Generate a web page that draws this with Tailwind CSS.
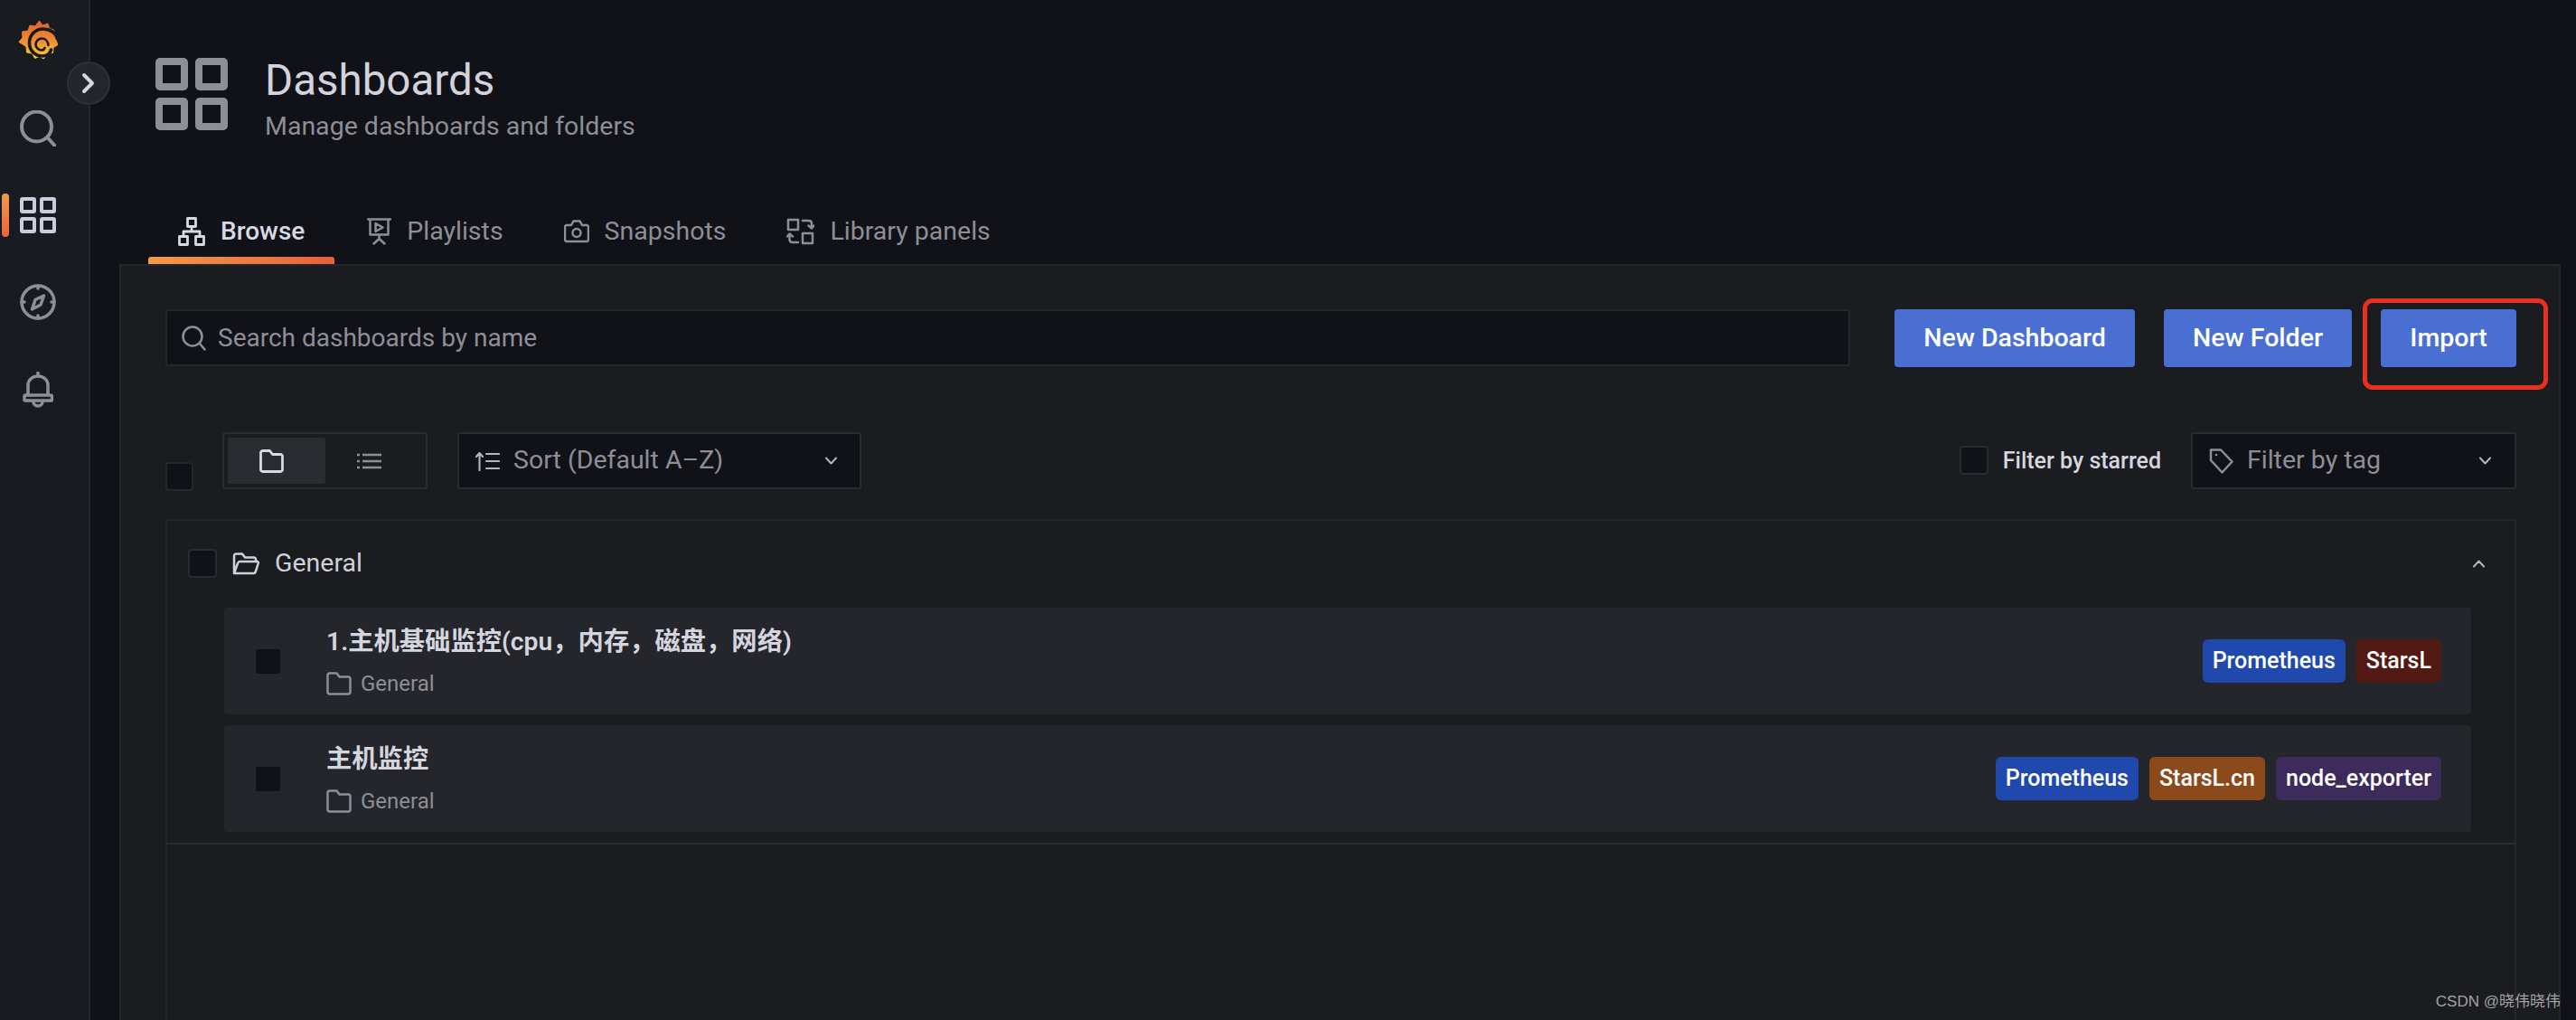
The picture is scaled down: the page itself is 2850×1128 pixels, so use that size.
<!DOCTYPE html>
<html lang="en">
<head>
<meta charset="UTF-8" />
<meta name="viewport" content="width=device-width, initial-scale=1.0" />
<title>Dashboards - Grafana</title>
<script src="https://cdn.jsdelivr.net/npm/@tailwindcss/browser@4"></script>
</head>

<body class="bg-[#111217] h-screen overflow-hidden flex font-['Roboto','Noto_Sans_CJK_SC',sans-serif] text-[#ccccdc]">

<!-- side menu -->
<aside class="relative w-[100px] shrink-0 h-full bg-[#181b1f] border-r-2 border-[#25262b] flex flex-col items-center pt-[22px] pr-[14px]">
  <svg class="w-[44px] h-[47px] mb-[53px]" viewBox="0 0 44 47">
    <defs>
      <linearGradient id="logoFill" x1="0" y1="0" x2="0" y2="1">
        <stop offset="0" stop-color="#e5602f"/>
        <stop offset="0.55" stop-color="#ef8f33"/>
        <stop offset="1" stop-color="#fbcf36"/>
      </linearGradient>
    </defs>
    <path fill="url(#logoFill)" stroke="url(#logoFill)" stroke-width="1" stroke-linejoin="round" d="M23.500 1l3.500 5 6-2 1.500 5.500 5 1.500 2 6 2 2.500-1 4 1.500 4-5 3-.5 6-6 .5-4 6-5-2.500-5 2-3-5.500-6-1-.5-6.500L1 24.500l4-5-.5-6.500 6.500-1 2-6 6 1z"/>
    <path fill="none" stroke="#181b1f" stroke-width="3.600" stroke-linecap="round" d="M43.500 21C42 14 35 10 27.500 10 19 10 12.500 17 12.500 25.500 12.500 34 19 40 27 40 31.500 40 35.500 37.500 36.500 33"/>
    <path fill="none" stroke="#181b1f" stroke-width="2.600" stroke-linecap="round" d="M33.500 28C33 23.500 30 20.500 26.500 20.500 22.500 20.500 19.500 23.500 19.500 27 19.500 31 23 33.500 26 33.500 27.500 33.500 29 32.500 29.500 31"/>
  </svg>
  <svg class="w-[40px] h-[40px] text-[#8e8e97]" viewBox="0 0 40 40" fill="none" stroke="currentColor" stroke-width="4" stroke-linecap="round">
    <circle cx="18.500" cy="18" r="16.500"/><path d="M30.500 30l8 9"/>
  </svg>
  <div class="relative mt-[56px]">
    <div class="absolute left-[-20px] top-[-4px] w-[8px] h-[48px] rounded-[4px] bg-gradient-to-b from-[#f2994a] to-[#e8633f]"></div>
    <svg class="w-[40px] h-[40px] text-[#ccccdc]" viewBox="0 0 40 40" fill="none" stroke="currentColor" stroke-width="4">
      <rect x="2" y="2" width="14" height="14" rx="1"/><rect x="24" y="2" width="14" height="14" rx="1"/>
      <rect x="2" y="24" width="14" height="14" rx="1"/><rect x="24" y="24" width="14" height="14" rx="1"/>
    </svg>
  </div>
  <svg class="w-[40px] h-[40px] mt-[56px] text-[#8e8e97]" viewBox="0 0 40 40" fill="none" stroke="currentColor" stroke-width="3.500" stroke-linecap="round" stroke-linejoin="round">
    <circle cx="20" cy="20" r="18"/><path d="M26.500 13l-3.500 10-9.500 5 3.500-10.500zM20 2v3M20 35v3M2 20h3M35 20h3"/>
  </svg>
  <svg class="w-[34px] h-[40px] mt-[57px] text-[#8e8e97]" viewBox="0 0 34 40" fill="none" stroke="currentColor" stroke-width="3.500" stroke-linecap="round" stroke-linejoin="round">
    <path d="M17 1v3M6 26V15C6 9 11 5 17 5s11 4 11 10v11M3 26h28c1 0 1.500 .5 1.500 1.500V31c0 .5-.5 1-1 1H3c-.5 0-1-.5-1-1v-3.500C2 26.500 2.500 26 3 26zM12 33c0 3 2 5 5 5s5-2 5-5"/>
  </svg>
  <button class="absolute left-[74px] top-[68px] w-[48px] h-[48px] rounded-full bg-[#25262b] border-2 border-[#2f3035] flex items-center justify-center z-10">
    <svg class="w-[16px] h-[24px] text-[#d5d6e0]" viewBox="0 0 16 24" fill="none" stroke="currentColor" stroke-width="4" stroke-linecap="round" stroke-linejoin="round"><path d="M3 3l9 9-9 9"/></svg>
  </button>
</aside>

<main class="flex-1 min-w-0 h-full flex flex-col pl-[32px] pr-[17px]">
  <!-- page header -->
  <header class="flex items-start gap-[42px] h-[144px] pt-[64px] pl-[40px]">
    <svg class="w-[80px] h-[80px] text-[#8e8e97]" viewBox="0 0 80 80" fill="none" stroke="currentColor" stroke-width="8">
      <rect x="4" y="4" width="28" height="28" rx="1"/><rect x="48" y="4" width="28" height="28" rx="1"/>
      <rect x="4" y="48" width="28" height="28" rx="1"/><rect x="48" y="48" width="28" height="28" rx="1"/>
    </svg>
    <div class="ml-[-1px]">
      <h1 class="text-[47.500px] leading-[56px] mt-[-3px] text-[#d2d3dc]">Dashboards</h1>
      <p class="text-[28.500px] leading-[36px] mt-[5px] text-[#8e8e97]">Manage dashboards and folders</p>
    </div>
  </header>

  <!-- tabs -->
  <nav class="flex h-[64px] mt-[84px] pl-[32px] gap-[1px] text-[28.500px] text-[#8e8e97]">
    <a class="relative flex items-center gap-[17px] pl-[33px] pr-[35px] pb-[8px] text-[28px] font-medium text-[#d8d9e2]">
      <svg class="w-[30px] h-[32px]" viewBox="0 0 30 32" fill="none" stroke="currentColor" stroke-width="2.800" stroke-linejoin="round">
        <rect x="10.500" y="1.500" width="9" height="9"/><rect x="1.500" y="21.500" width="9" height="9"/><rect x="19.500" y="21.500" width="9" height="9"/><path d="M15 10.500v5.500M6 21.500V16h18v5.500"/>
      </svg>
      Browse
      <span class="absolute left-0 right-[2px] bottom-0 h-[8px] rounded-t-[3px] bg-gradient-to-r from-[#f2994a] to-[#e5603f]"></span>
    </a>
    <a class="flex items-center gap-[17px] px-[33px] pb-[8px]">
      <svg class="w-[27px] h-[30px]" viewBox="0 0 27 30" fill="none" stroke="currentColor" stroke-width="2.500" stroke-linejoin="round" stroke-linecap="round">
        <path d="M1 1.500h25M3.500 1.500v17h20v-17M13.500 18.500v5M13.500 23l-6 5.500M13.500 23l6 5.500M9.500 6l8 4.500-8 4.500z"/>
      </svg>
      Playlists
    </a>
    <a class="flex items-center gap-[17px] px-[33px] pb-[8px]">
      <svg class="w-[28px] h-[28px]" viewBox="0 0 28 28" fill="none" stroke="currentColor" stroke-width="2.500" stroke-linejoin="round">
        <path d="M3 7h5l2.500-4.500h7L20 7h5c1 0 2 1 2 2v14c0 1-1 2-2 2H3c-1 0-2-1-2-2V9c0-1 1-2 2-2z"/><circle cx="14" cy="15.500" r="4.500"/>
      </svg>
      Snapshots
    </a>
    <a class="flex items-center gap-[17px] px-[33px] pb-[8px]">
      <svg class="w-[31px] h-[30px]" viewBox="0 0 31 30" fill="none" stroke="currentColor" stroke-width="2.500" stroke-linecap="round" stroke-linejoin="round">
        <rect x="2" y="2" width="11" height="11"/><rect x="18" y="17" width="11" height="11"/>
        <path d="M18 3h6.500c2 0 3.500 1 3.500 3v5M24.500 8.500l3.500 3 2.500-3M13 27H7c-2 0-3.500-1-3.500-3v-6M1 20.500l2.500-3 3.500 3"/>
      </svg>
      Library panels
    </a>
  </nav>

  <!-- page panel -->
  <section class="flex-1 min-h-0 flex flex-col bg-[#1a1c20] border-2 border-b-0 border-[#25262b] pl-[49px] pr-[47px] pt-[48px]">
    <div class="flex items-stretch h-[64px]">
      <div class="flex-1 h-[63px] flex items-center gap-[13px] pl-[16px] bg-[#111217] border-2 border-[#25262b] rounded-[4px] text-[28px] text-[#8e8e97]">
        <svg class="w-[27px] h-[28px]" viewBox="0 0 27 28" fill="none" stroke="currentColor" stroke-width="2.500" stroke-linecap="round">
          <circle cx="12" cy="12" r="10.500"/><path d="M20 20l5.500 6.500"/>
        </svg>
        Search dashboards by name
      </div>
      <button class="ml-[49px] w-[266px] rounded-[4px] bg-[#4a6fd2] text-white text-[28.500px] font-medium">New Dashboard</button>
      <button class="ml-[32px] w-[208px] rounded-[4px] bg-[#4a6fd2] text-white text-[28.500px] font-medium">New Folder</button>
      <button class="relative ml-[32px] w-[150px] rounded-[4px] bg-[#4a6fd2] text-white text-[28.500px] font-medium">
        Import
        <span class="absolute left-[-20px] top-[-12px] w-[205px] h-[101px] border-[5px] border-[#e9301f] rounded-[11px]"></span>
      </button>
    </div>

    <div class="flex items-stretch h-[63px] mt-[72px]">
      <span class="self-end mb-[-2px] w-[31px] h-[32px] bg-[#111217] border-2 border-[#25262b] rounded-[4px]"></span>
      <div class="ml-[32px] w-[227px] border-2 border-[#2a2b30] rounded-[3px] p-[4px] flex">
        <div class="w-[108px] bg-[#2b2c32] rounded-[3px] flex items-center justify-center pr-[12px]">
          <svg class="w-[27px] h-[26px] text-[#d8d9e2]" viewBox="0 0 27 26" fill="none" stroke="currentColor" stroke-width="2.800" stroke-linejoin="round">
            <path d="M3.500 1.500h8l3 4h9c1 0 2 1 2 2v15c0 1-1 2-2 2h-20c-1 0-2-1-2-2v-19c0-1 1-2 2-2z"/>
          </svg>
        </div>
        <div class="flex-1 flex items-center justify-center pr-[11px]">
          <svg class="w-[27px] h-[18px] text-[#8e8e97]" viewBox="0 0 27 18" fill="none" stroke="currentColor" stroke-width="2.500">
            <path d="M6 2h21M6 9h21M6 16h21M0 2h3M0 9h3M0 16h3"/>
          </svg>
        </div>
      </div>
      <div class="ml-[33px] w-[447px] flex items-center gap-[15px] pl-[18px] pr-[24px] bg-[#111217] border-2 border-[#2a2b30] rounded-[3px] text-[28.500px] text-[#8e8e97]">
        <svg class="w-[27px] h-[22px] text-[#b4b5be]" viewBox="0 0 27 22" fill="none" stroke="currentColor" stroke-width="2.100" stroke-linecap="round" stroke-linejoin="round">
          <path d="M4.500 21V2M1 6l3.500-4L8 6M12 3h14M12 11h14M12 19h14"/>
        </svg>
        <span class="flex-1">Sort (Default A–Z)</span>
        <svg class="w-[15px] h-[9px] text-[#b4b5be]" viewBox="0 0 15 9" fill="none" stroke="currentColor" stroke-width="2" stroke-linecap="round" stroke-linejoin="round"><path d="M2 1.500l5.500 6 5.500-6"/></svg>
      </div>
      <div class="flex-1"></div>
      <div class="flex items-center gap-[16px] text-[25px] font-medium text-[#d4d5de]">
        <span class="w-[32px] h-[32px] mt-[-2px] bg-[#111217] border-2 border-[#2a2b30] rounded-[4px]"></span>
        Filter by starred
      </div>
      <div class="ml-[33px] w-[360px] flex items-center gap-[15px] pl-[18px] pr-[25px] bg-[#111217] border-2 border-[#2a2b30] rounded-[3px] text-[28.500px] text-[#8e8e97]">
        <svg class="w-[27px] h-[28px]" viewBox="0 0 27 28" fill="none" stroke="currentColor" stroke-width="2.500" stroke-linejoin="round">
          <path d="M2 1.500h11l12.500 13-11 12L2 13z"/><circle cx="8" cy="7" r="1.300" fill="currentColor" stroke="none"/>
        </svg>
        <span class="flex-1">Filter by tag</span>
        <svg class="w-[15px] h-[9px] text-[#b4b5be]" viewBox="0 0 15 9" fill="none" stroke="currentColor" stroke-width="2" stroke-linecap="round" stroke-linejoin="round"><path d="M2 1.500l5.500 6 5.500-6"/></svg>
      </div>
    </div>

    <!-- results -->
    <div class="flex-1 mt-[33px] border-2 border-b-0 border-[#25262b] rounded-t-[3px]">
      <div class="flex items-center h-[32px] mt-[31px] pl-[23px] pr-[32px]">
        <span class="w-[32px] h-[32px] bg-[#111217] border-2 border-[#2a2b30] rounded-[4px]"></span>
        <svg class="ml-[17px] w-[30px] h-[25px] text-[#d0d1da]" viewBox="0 0 30 25" fill="none" stroke="currentColor" stroke-width="2.500" stroke-linejoin="round">
          <path d="M2 23V3.500c0-1 1-2 2-2h7l3 4h10c1 0 2 1 2 2V10M2 23l4-11c.5-1 1-2 2-2h19.500c1 0 1.500 1 1.200 2l-3 9.500c-.3 1-1 1.500-2 1.500z"/>
        </svg>
        <span class="ml-[17px] flex-1 text-[28.500px] text-[#d0d1da]">General</span>
        <svg class="w-[15px] h-[9px] text-[#b4b5be]" viewBox="0 0 15 9" fill="none" stroke="currentColor" stroke-width="2" stroke-linecap="round" stroke-linejoin="round"><path d="M2 7.500l5.500-6 5.500 6"/></svg>
      </div>

      <div class="ml-[63px] mr-[48px] mt-[33px] flex flex-col gap-[12px]">
        <div class="h-[118px] bg-[#24262b] rounded-[4px] flex items-center pl-[33px] pr-[33px]">
          <span class="w-[31px] h-[31px] bg-[#111217] border-2 border-[#25262b] rounded-[4px]"></span>
          <div class="ml-[49px] flex-1">
            <div class="mt-[-2px] text-[28.300px] leading-[36px] font-semibold text-[#d4d5de]">1.主机基础监控(cpu，内存，磁盘，网络)</div>
            <div class="mt-[15px] flex items-center gap-[10px] text-[24px] leading-[26px] text-[#8e8e97]">
              <svg class="w-[28px] h-[26px]" viewBox="0 0 28 26" fill="none" stroke="currentColor" stroke-width="2.500" stroke-linejoin="round"><path d="M3.500 1.500h8l3 4h10c1 0 2 1 2 2v15c0 1-1 2-2 2h-21c-1 0-2-1-2-2v-19c0-1 1-2 2-2z"/></svg>
              General
            </div>
          </div>
          <div class="flex gap-[12px] text-[25px] font-medium text-white">
            <span class="h-[48px] px-[11px] leading-[48px] rounded-[6px] bg-[#2049ae]">Prometheus</span>
            <span class="h-[48px] px-[11px] leading-[48px] rounded-[6px] bg-[#521a12]">StarsL</span>
          </div>
        </div>
        <div class="h-[118px] bg-[#24262b] rounded-[4px] flex items-center pl-[33px] pr-[33px]">
          <span class="w-[31px] h-[31px] bg-[#111217] border-2 border-[#25262b] rounded-[4px]"></span>
          <div class="ml-[49px] flex-1">
            <div class="mt-[-2px] text-[28.300px] leading-[36px] font-semibold text-[#d4d5de]">主机监控</div>
            <div class="mt-[15px] flex items-center gap-[10px] text-[24px] leading-[26px] text-[#8e8e97]">
              <svg class="w-[28px] h-[26px]" viewBox="0 0 28 26" fill="none" stroke="currentColor" stroke-width="2.500" stroke-linejoin="round"><path d="M3.500 1.500h8l3 4h10c1 0 2 1 2 2v15c0 1-1 2-2 2h-21c-1 0-2-1-2-2v-19c0-1 1-2 2-2z"/></svg>
              General
            </div>
          </div>
          <div class="flex gap-[12px] text-[25px] font-medium text-white">
            <span class="h-[48px] px-[11px] leading-[48px] rounded-[6px] bg-[#2049ae]">Prometheus</span>
            <span class="h-[48px] px-[11px] leading-[48px] rounded-[6px] bg-[#8c4a1c]">StarsL.cn</span>
            <span class="h-[48px] px-[11px] leading-[48px] rounded-[6px] bg-[#3d2b5c]">node_exporter</span>
          </div>
        </div>
      </div>
      <div class="mt-[12px] h-[2px] bg-[#2a2b30]"></div>
    </div>
  </section>
</main>

<!-- image watermark -->
<div class="absolute right-[17px] bottom-[10px] text-[17px] leading-[20px] text-[#a3a3a3] font-['Liberation_Sans','Noto_Sans_CJK_SC',sans-serif]">CSDN @晓伟晓伟</div>

</body>
</html>
